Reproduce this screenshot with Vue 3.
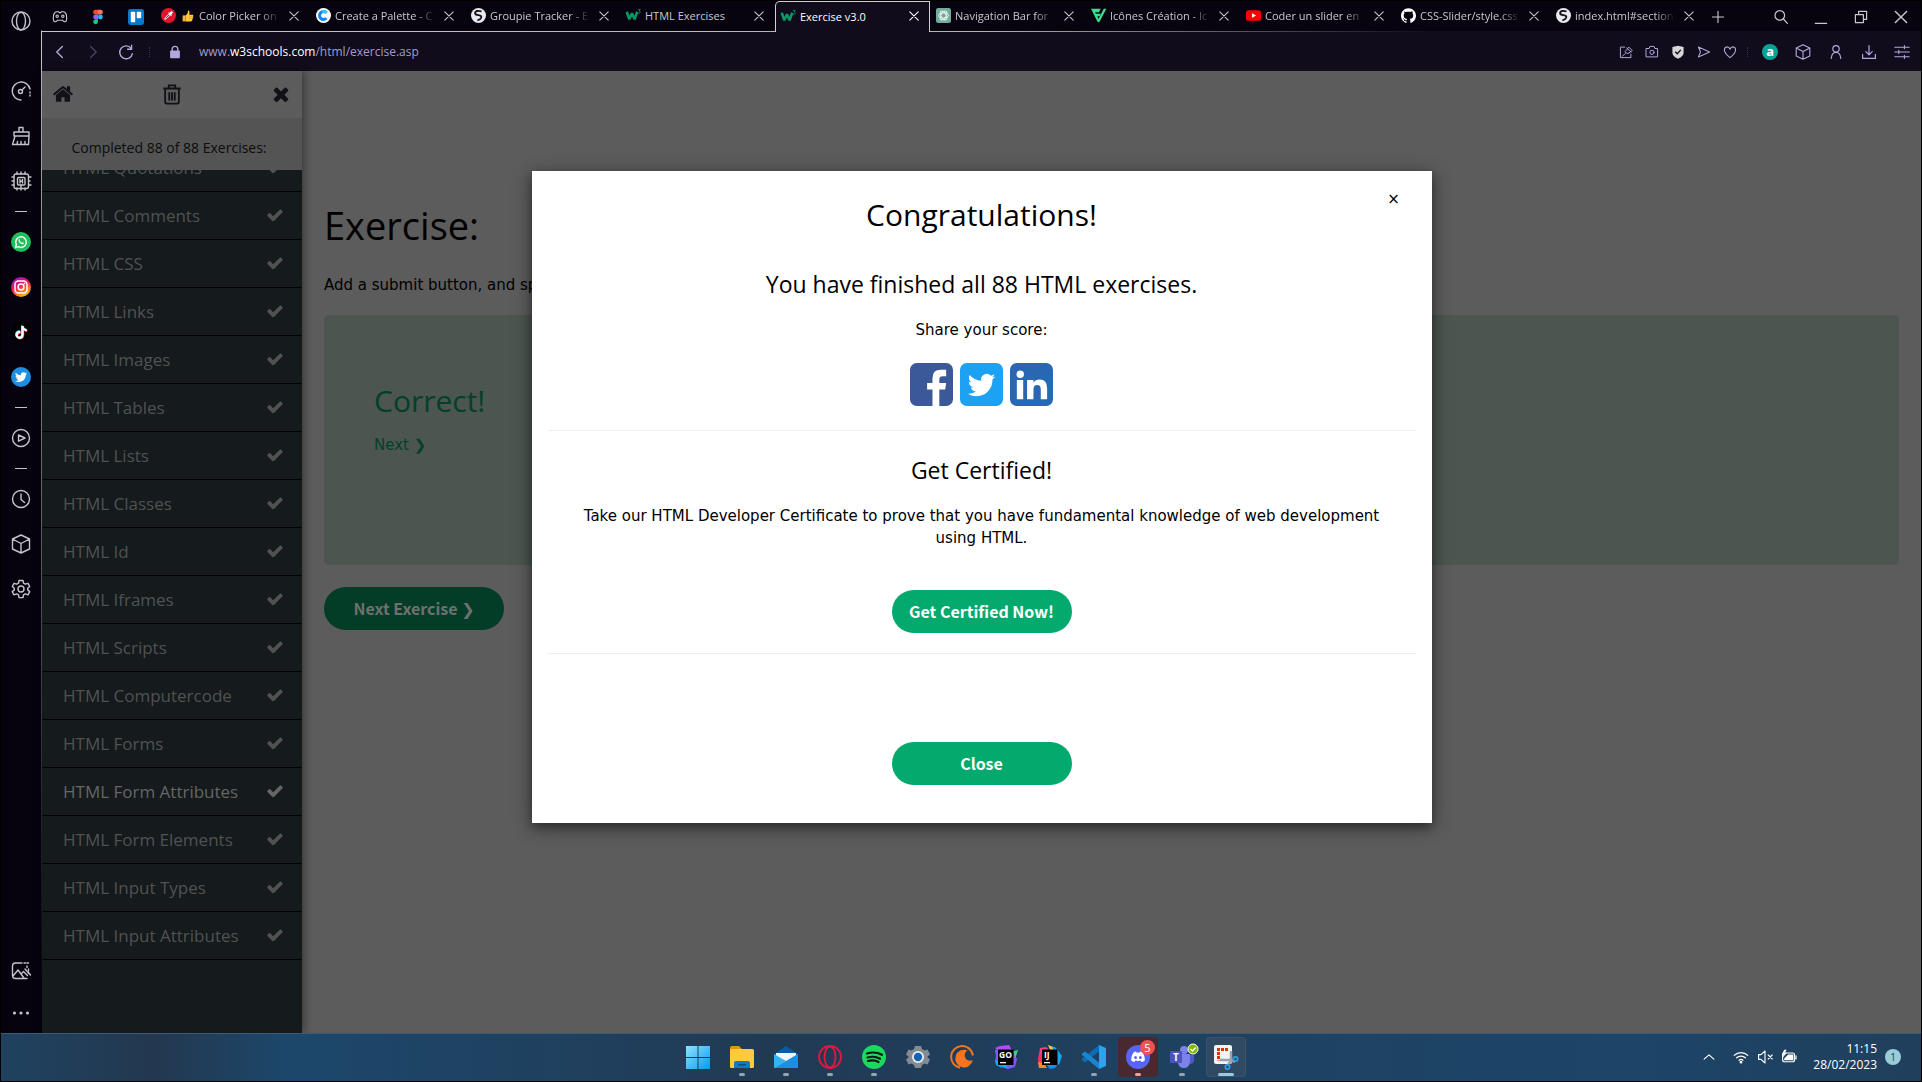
<script setup>
const bird = 'M23.953 4.57a10 10 0 01-2.825.775 4.958 4.958 0 002.163-2.723c-.951.555-2.005.959-3.127 1.184a4.92 4.92 0 00-8.384 4.482C7.69 8.095 4.067 6.13 1.64 3.162a4.822 4.822 0 00-.666 2.475c0 1.71.87 3.213 2.188 4.096a4.904 4.904 0 01-2.228-.616v.06a4.923 4.923 0 003.946 4.827 4.996 4.996 0 01-2.212.085 4.936 4.936 0 004.604 3.417 9.867 9.867 0 01-6.102 2.105c-.39 0-.779-.023-1.17-.067a13.995 13.995 0 007.557 2.209c9.053 0 13.998-7.496 13.998-13.985 0-.21 0-.42-.015-.63A9.935 9.935 0 0024 4.59z'
const note = 'M12.525.02c1.31-.02 2.61-.01 3.91-.02.08 1.53.63 3.09 1.75 4.17 1.12 1.11 2.7 1.62 4.24 1.79v4.03c-1.44-.05-2.89-.35-4.2-.97-.57-.26-1.1-.59-1.62-.93-.01 2.92.01 5.84-.02 8.75-.08 1.4-.54 2.79-1.35 3.94-1.31 1.92-3.58 3.17-5.91 3.21-1.43.08-2.86-.31-4.08-1.03-2.02-1.19-3.44-3.37-3.65-5.71-.02-.5-.03-1-.01-1.49.18-1.9 1.12-3.72 2.58-4.96 1.66-1.44 3.98-2.13 6.15-1.72.02 1.48-.04 2.96-.04 4.44-.99-.32-2.15-.23-3.02.37-.63.41-1.11 1.04-1.36 1.75-.21.51-.15 1.07-.14 1.61.24 1.64 1.82 3.02 3.5 2.87 1.12-.01 2.19-.66 2.77-1.61.19-.33.4-.67.41-1.06.1-1.79.06-3.57.07-5.36.01-4.03-.01-8.05.02-12.07z'
const line = (body, w = 1.2) => `<g fill="none" stroke="currentColor" stroke-width="${w}" stroke-linecap="round" stroke-linejoin="round">${body}</g>`
const globe = '<circle cx="10" cy="10" r="10" fill="#e8eaed"/><path d="M14 4.500q-8-2-8.500 2 0 2.500 4.500 3 4.500.5 3.500 3.500-1 2.500-5 3.500" fill="none" stroke="#15121f" stroke-width="2.600"/>'
const w3 = '<path d="M1 5l3.400 10L8 7l3.400 8L15 5" fill="none" stroke="#059862" stroke-width="3.400" stroke-linejoin="bevel"/><path d="M16 2h3l-1.600 2q2 .2 1.400 2t-3 1" fill="none" stroke="#059862" stroke-width="1.100"/>'
const cube = '<path d="M10 1l8.500 4v10L10 19l-8.500-4V5zM1.500 5L10 9.500 18.500 5M10 9.500V19"/>'

// Every glyph is drawn on a 20 × 20 grid.
const icons = {
  opera: line('<circle cx="10" cy="10" r="9"/><ellipse cx="10" cy="10" rx="4.500" ry="8.800"/>', 1.4),
  gauge: line('<path d="M10 19A9 9 0 1 1 19 8"/><path d="M19 11v5" stroke-dasharray="1 2"/><circle cx="9.500" cy="10.500" r="2"/><path d="M11 9l3-3"/>', 1.4),
  broom: line('<path d="M8 6V1.500h4V6M3 10V6h15v4M3 10h15M4 10L1.500 18.500h16l.5-8.500M6 18.500l.5-3M10 18.500v-3M14 18.500v-3"/>', 1.4),
  chip: line('<rect x="3" y="3" width="14.500" height="14.500" rx="2"/><rect x="6.500" y="6.500" width="7.500" height="7.500" rx="1"/><path d="M9 8.500v3.500M11.500 8.500v3.500M9 10.200h2.500M6 3V1M10 3V1M14 3V1M6 19v-2M10 19v-5M14 19v-2M1 6h2M1 10h2M1 14h2M17.500 6H20M17.500 10H19M17.500 14H20"/>', 1.4),
  whatsapp: '<circle cx="10" cy="10" r="10" fill="#1fbf5c"/><path d="M4.500 15.500l.8-3a5.300 5.300 0 1 1 2.100 2.200z" fill="none" stroke="#fff" stroke-width="1.400"/><path d="M7.700 7.600c.7-.9 1.200-.2 1.400.5.1.5-.4.700-.3 1 .4.900 1.200 1.400 2 1.700.4.100.7-.8 1.100-.6 1.500.6 1.100 1.200.5 1.700-2 1.200-5.600-2-4.700-4.300z" fill="#fff"/>',
  instagram: '<defs><linearGradient id="ig" x1="0" y1="0" x2=".5" y2="1"><stop offset="0" stop-color="#7a1be0"/><stop offset=".5" stop-color="#f0135f"/><stop offset="1" stop-color="#ffb300"/></linearGradient></defs><circle cx="10" cy="10" r="10" fill="url(#ig)"/><g fill="none" stroke="#fff" stroke-width="1.500"><rect x="4" y="4" width="12" height="12" rx="3.500"/><circle cx="10" cy="10" r="2.900"/></g><circle cx="13.500" cy="6.500" r=".9" fill="#fff"/>',
  tiktok: `<circle cx="10" cy="10" r="10" fill="#000"/><g transform="translate(3.200 3.400) scale(.54)"><path d="${note}" fill="#25f4ee"/><path d="${note}" transform="translate(2 2)" fill="#fe2c55"/><path d="${note}" transform="translate(1 1)" fill="#fff"/></g>`,
  twitter: `<circle cx="10" cy="10" r="10" fill="#1d8fe0"/><path d="${bird}" transform="translate(4 4.200) scale(.5)" fill="#fff"/>`,
  play: line('<circle cx="10" cy="10" r="8.500"/><path d="M7.500 7l6.500 3-6.500 3.200z"/>', 1.4),
  clock: line('<circle cx="10" cy="10" r="8.500"/><path d="M10 5v5.500l3.500 3"/>', 1.4),
  cube: line(cube, 1.4),
  gear: line('<circle cx="10" cy="10" r="3"/><path d="M8 1.500h4l.5 2.700 1.800 1L17 4.300l1.700 3.200-2 1.700v1.700l2 1.700L17 15.800l-2.700-.9-1.800 1-.5 2.700H8l-.5-2.700-1.800-1-2.700.9-1.700-3.200 2-1.700V9.200l-2-1.700L3 4.300l2.700.9 1.800-1z"/>', 1.4),
  picture: line('<path d="M11 2H4.500Q1.500 2 1.500 5v9.500q0 3 3 3H16M2 15l5-6 6 8M10.500 12.500l2-2 4 4M14 8l5.500 6"/><path d="M17.500 8v6M13 2h5M16 5v2" stroke-dasharray="1.500 1.500"/>', 1.4),
  dots: '<g fill="currentColor"><circle cx="3.500" cy="10" r="1.600"/><circle cx="10" cy="10" r="1.600"/><circle cx="16.500" cy="10" r="1.600"/></g>',
  mask: line('<path d="M6 3.500h2l2 1.500 2-1.500h2q3 0 4 4 .8 4 0 7-2 3-5-.5H7q-3 3.500-5 .5-.8-3 0-7 1-4 4-4z"/><circle cx="6.500" cy="9" r="1.500"/><circle cx="13.500" cy="9" r="1.500"/>', 1.4),
  figma: '<path d="M10 1H7a3 3 0 0 0 0 6h3z" fill="#f24e1e"/><path d="M10 1h3a3 3 0 0 1 0 6h-3z" fill="#ff7262"/><path d="M10 7H7a3 3 0 0 0 0 6h3z" fill="#a259ff"/><circle cx="13" cy="10" r="3" fill="#1abcfe"/><path d="M7 13h3v3a3 3 0 1 1-3-3z" fill="#0acf83"/>',
  trello: '<rect width="20" height="20" rx="3" fill="#0079d1"/><rect x="3.500" y="3.500" width="5.500" height="13" rx="1" fill="#fff"/><rect x="11" y="3.500" width="5.500" height="8" rx="1" fill="#fff"/>',
  picker: '<circle cx="10" cy="10" r="10" fill="#e0162f"/><path d="M5 15l1-2.500 4.500-4.500 1.500 1.500L7.500 14z" fill="none" stroke="#fff" stroke-width="1.200"/><path d="M9.500 6.500l4 4 1-1-.7-1 2.200-2.500-2-2-2.500 2.200-1-.7z" fill="#fff"/>',
  thumb: '<path d="M1 9h5v10H1z" fill="#f5b82e"/><path d="M6 9c3-2 4-4 4-8 3 0 3 4 2 7h5q2 0 2 2l-2 7q-.5 2-3 2H6z" fill="#ffc83d"/><path d="M12 11h6M12 14h6" stroke="#d99a1c"/>',
  coolors: '<circle cx="10" cy="10" r="10" fill="#fff"/><path d="M14 6.500A5.300 5.300 0 1 0 14 13.500" fill="none" stroke="#0a84ff" stroke-width="4"/><path d="M14 6.500a5 5 0 0 0-6-1.500" fill="none" stroke="#34c3f5" stroke-width="4"/>',
  globe,
  w3,
  gpt: '<rect width="20" height="20" rx="3" fill="#74aa9c"/><g fill="none" stroke="#e9f3f0" stroke-width="1.300"><ellipse cx="10" cy="10" rx="6.500" ry="3.500"/><ellipse cx="10" cy="10" rx="6.500" ry="3.500" transform="rotate(60 10 10)"/><ellipse cx="10" cy="10" rx="6.500" ry="3.500" transform="rotate(120 10 10)"/></g>',
  flaticon: '<path d="M0 1h13l-2.500 4.500H5.500l1 2H13L11.500 11H8.500l1.500 3.500L17 1h3.500L11.500 18q-1.500 2-3 0z" fill="#3ddc91"/>',
  youtube: '<rect y="3" width="20" height="14" rx="3.500" fill="#f00"/><path d="M8 7l5.500 3L8 13z" fill="#fff"/>',
  github: '<path transform="scale(.833)" fill="#fff" d="M12 .297c-6.630 0-12 5.373-12 12 0 5.303 3.438 9.800 8.205 11.385.6.113.82-.258.82-.577 0-.285-.01-1.040-.015-2.040-3.338.724-4.042-1.610-4.042-1.610C4.422 18.070 3.633 17.700 3.633 17.700c-1.087-.744.084-.729.084-.729 1.205.084 1.838 1.236 1.838 1.236 1.070 1.835 2.809 1.305 3.495.998.108-.776.417-1.305.76-1.605-2.665-.3-5.466-1.332-5.466-5.930 0-1.310.465-2.380 1.235-3.220-.135-.303-.54-1.523.105-3.176 0 0 1.005-.322 3.300 1.230.96-.267 1.980-.399 3-.405 1.020.006 2.040.138 3 .405 2.280-1.552 3.285-1.230 3.285-1.230.645 1.653.24 2.873.12 3.176.765.84 1.230 1.910 1.230 3.220 0 4.610-2.805 5.625-5.475 5.920.42.36.81 1.096.81 2.220 0 1.606-.015 2.896-.015 3.286 0 .315.21.69.825.57C20.565 22.092 24 17.592 24 12.297c0-6.627-5.373-12-12-12"/>',
  x: line('<path d="M3 3l14 14M17 3L3 17"/>', 1.8),
  plus: line('<path d="M10 2v16M2 10h16"/>', 1.6),
  search: line('<circle cx="8.500" cy="8" r="6"/><path d="M13 12.500l5 5.500"/>', 1.5),
  min: line('<path d="M3 18h14"/>', 1.6),
  restore: line('<path d="M3 7h10v10H3zM7 7V3h10v10h-4"/>', 1.5),
  back: line('<path d="M13 3l-7 7 7 7"/>', 1.7),
  forward: line('<path d="M7 3l7 7-7 7"/>', 1.7),
  reload: line('<path d="M16.500 5.500A8 8 0 1 0 18 12M17 1.500v5h-5"/>', 1.7),
  lock: '<rect x="3" y="8" width="14" height="11" rx="1" fill="currentColor"/><path d="M6 9V6a4 4 0 0 1 8 0v3" fill="none" stroke="currentColor" stroke-width="2"/>',
  edit: line('<path d="M8 3H2v15h15v-5M11 4l6 6M10 8l4-5 5 5-5 3.500-3 .5-2-2zM9 12l-4 4"/>', 1.4),
  camera: line('<path d="M2 5h4l1-3h6l1 3h4v12H2z"/><circle cx="10" cy="10.500" r="3"/>', 1.4),
  shield: '<path d="M10 1l8 2v8q0 5-8 8.500Q2 16 2 11V3z" fill="#d6d6d6"/><path d="M6 9.500l3 3 5-5.500" fill="none" stroke="#100c1c" stroke-width="2"/>',
  send: line('<path d="M2 3l16 7-16 7 3-7z"/>', 1.5),
  heart: line('<path d="M10 18C4 13 2 10 2 7c0-5 6-6 8-1 2-5 8-4 8 1 0 3-2 6-8 11z"/>', 1.5),
  avatar: '<circle cx="10" cy="10" r="10" fill="#0ba294"/><text x="10" y="15" text-anchor="middle" font-family="Open Sans, sans-serif" font-weight="700" font-size="16" fill="#fff">a</text>',
  person: line('<circle cx="10" cy="6" r="4"/><path d="M4 18c1-10 11-10 12 0"/>', 1.5),
  download: line('<path d="M2 13v5h16v-5M10 2v11M6 9.500l4 4 4-4"/>', 1.5),
  sliders: line('<path d="M1 4h18M1 10h18M1 16h18M13 2v4M6 8v4M13 14v4"/>', 1.4),
  wifi: line('<path d="M1.500 8a12 12 0 0 1 17 0M4.500 11a8 8 0 0 1 11 0M7.500 14a4 4 0 0 1 5 0"/><circle cx="10" cy="16.500" r="1"/>', 1.5),
  mute: line('<path d="M2 7h3l5-4.500v15L5 13H2zM14 7.500l5 5M19 7.500l-5 5"/>', 1.4),
  battery: '<rect x="2" y="5" width="15" height="11" rx="2.500" fill="none" stroke="currentColor" stroke-width="1.400"/><path d="M9 7h6.500v7H4v-2zM18 8h1.500v5H18z" fill="currentColor"/><path d="M4 1L1 7h2l-1 4 5-6H5l2-4z" fill="currentColor"/>',
  up: line('<path d="M3 13l7-6 7 6"/>', 1.6),
}

const rail = [
  ['gauge', 'broom', 'chip'],
  ['whatsapp', 'instagram', 'tiktok', 'twitter'],
  ['play'],
  ['clock', 'cube', 'gear'],
]
const tabs = [
  { icon: 'picker', extra: 'thumb', text: 'Color Picker on' },
  { icon: 'coolors', text: 'Create a Palette - C' },
  { icon: 'globe', text: 'Groupie Tracker - E' },
  { icon: 'w3', text: 'HTML Exercises' },
  { icon: 'w3', text: 'Exercise v3.0', active: true },
  { icon: 'gpt', text: 'Navigation Bar for' },
  { icon: 'flaticon', text: 'Icônes Création - Ic' },
  { icon: 'youtube', text: 'Coder un slider en' },
  { icon: 'github', text: 'CSS-Slider/style.css' },
  { icon: 'globe', text: 'index.html#section' },
]
const lessons = ['Quotations', 'Comments', 'CSS', 'Links', 'Images', 'Tables', 'Lists', 'Classes', 'Id', 'Iframes', 'Scripts', 'Computercode', 'Forms', 'Form Attributes', 'Form Elements', 'Input Types', 'Input Attributes']

// Taskbar artwork, on a 24 × 24 grid.
const apps = [
  { name: 'Start', art: '<defs><linearGradient id="win" x1="0" y1="0" x2="1" y2="1"><stop offset="0" stop-color="#8fe3ff"/><stop offset="1" stop-color="#0a98f0"/></linearGradient></defs><path d="M0 1h11.500v11H0zM12.500 1H24v11H12.500zM0 13h11.500v11H0zM12.500 13H24v11H12.500z" fill="url(#win)"/>' },
  { name: 'Files', run: true, art: '<path d="M0 3q0-2 2-2h7l3 3v4H0z" fill="#d99a12"/><rect y="4" width="24" height="19" rx="1.500" fill="#ffcb3d"/><path d="M4 23v-5q0-2 2-2h12q2 0 2 2v5z" fill="#1478c8"/><path d="M8 19h8v1.500H8z" fill="#0b4d8a"/>' },
  { name: 'Mail', run: true, art: '<path d="M0 9l12-8 12 8v14H0z" fill="#0c59a4"/><path d="M2 8h20v9H2z" fill="#f4f4f4"/><path d="M0 9l12 7 12-7v13q0 1-1 1H1q-1 0-1-1z" fill="#35b4f2"/><path d="M24 9v13q0 1-1 1H1z" fill="#1d8fe0"/>' },
  { name: 'Opera', run: true, art: '<g fill="none" stroke="#e0183f" stroke-width="1.800"><circle cx="12" cy="12" r="11"/><ellipse cx="12" cy="12" rx="5.500" ry="10.500"/></g>' },
  { name: 'Spotify', run: true, art: '<circle cx="12" cy="12" r="12" fill="#1ed760"/><path d="M5 8.500q8-2.500 15 1.300M5.500 12.500q7-2 12.500 1.200M6 16q6-1.500 10.500 1" fill="none" stroke="#0b1a10" stroke-width="2.200" stroke-linecap="round"/>' },
  { name: 'Settings', art: '<path d="M9 1h6l1 3 2.500 1.500 3-1L24 9.500l-2.500 2v1l2.500 2-2.500 5-3-1L16 20l-1 3H9l-1-3-2.500-1.500-3 1L0 14.500l2.500-2v-1L0 9.500l2.500-5 3 1L8 4z" fill="#858b93"/><circle cx="12" cy="12" r="6" fill="#e8edf2"/><circle cx="12" cy="12" r="4.200" fill="#1265b0"/>' },
  { name: 'Crunchyroll', art: '<path d="M23 10.500A11 11 0 1 0 10 22.800" fill="none" stroke="#f47521" stroke-width="2"/><path d="M17.500 5.500A8.800 8.800 0 1 0 22.800 15 4.800 4.800 0 1 1 17.500 5.500z" fill="#f47521"/>' },
  { name: 'GoLand', art: '<path d="M1 3l5-2 9-1 3 5H3z" fill="#b14bff"/><path d="M1 5h4v10l-4 2 1-6z" fill="#7d5bff"/><path d="M18 6l5 0-2 5 2 3-2 8-4 1z" fill="#8a4dff"/><path d="M20 6l4-1-3 9z" fill="#3ddc6a"/><path d="M1 15l5 2 2 6-6-3zM7 19h11l-4 5-6-2z" fill="#1fa8f5"/><path d="M12 20h8l-2 3-5 1z" fill="#7b5cff"/><rect x="4" y="4.500" width="15.500" height="15.500" fill="#000"/><text x="5" y="12.500" font-family="Open Sans, sans-serif" font-weight="700" font-size="8.500" fill="#fff">GO</text><path d="M6 17h6v1.300H6z" fill="#fff"/>' },
  { name: 'IntelliJ', art: '<path d="M2 3l6-1 4 4-7 4-4 0z" fill="#ff3d8b"/><path d="M1 9h4v10l-4 1-1-6z" fill="#ff2e63"/><path d="M10 0l8 3-5 4z" fill="#ffc93d"/><path d="M14 1l5 3 5 7-3 9-3-2z" fill="#16a6e8"/><path d="M0 17l6 1 3 5-8 0z" fill="#ff8a1f"/><path d="M8 19h12l-3 4-5 1z" fill="#1f8af5"/><rect x="4" y="4.500" width="15.500" height="15.500" fill="#000"/><text x="6" y="12.500" font-family="Open Sans, sans-serif" font-weight="700" font-size="8.500" fill="#fff">IJ</text><path d="M6 17h6v1.300H6z" fill="#fff"/>' },
  { name: 'Code', run: true, art: '<path d="M17 0v6.500L3 17.500 0 15.500V14z" fill="#0f6cb0"/><path d="M17 24v-6.500L3 6.500 0 8.500V10z" fill="#1785d0"/><path d="M17 0l7 3v18l-7 3z" fill="#29a4ee"/>' },
  { name: 'Discord', run: true, alert: true, art: '<circle cx="12" cy="12" r="12" fill="#5865f2"/><path d="M8 7l2-.5.6 1.200q1.400-.2 2.800 0L14 6.500l2 .5q3 3.500 2.800 8.500-1.500 1.200-3.200 1.600l-.9-1.500q-2.700.6-5.400 0l-.9 1.500q-1.700-.4-3.200-1.600Q5 10.500 8 7z" fill="#fff"/><ellipse cx="9.600" cy="12.500" rx="1.400" ry="1.600" fill="#5865f2"/><ellipse cx="14.400" cy="12.500" rx="1.400" ry="1.600" fill="#5865f2"/>' },
  { name: 'Teams', run: true, art: '<circle cx="14" cy="5" r="4" fill="#7b83eb"/><path d="M9 9h11v8q-1 6-6 6t-6-5z" fill="#7b83eb"/><path d="M20 10h4v6q-1 3-4 3z" fill="#5059c9"/><rect y="6" width="12" height="12" rx="1" fill="#4b53bc"/><text x="6" y="15.500" text-anchor="middle" font-family="Open Sans, sans-serif" font-weight="700" font-size="10" fill="#fff">T</text><circle cx="23" cy="4" r="5" fill="#7fba00" stroke="#fff"/><path d="M20.500 4l2 2 3.200-3.500" fill="none" stroke="#fff" stroke-width="1.500"/>' },
  { name: 'Snipping Tool', run: true, current: true, art: '<rect width="18" height="19" rx="2" fill="#f3f3f3"/><path d="M3 4.500h11M4.500 3v12.500" stroke="#d8320e" stroke-width="3" stroke-dasharray="3 1"/><path d="M17 6v9q0 2-3 4M6 15h9q3 0 6 2" fill="none" stroke="#9aa1a8" stroke-width="2.500"/><g fill="none" stroke="#2a9fe6" stroke-width="1.700"><circle cx="21.500" cy="14" r="2.200"/><circle cx="13.500" cy="22" r="2.200"/></g>' },
]
</script>

<template>
  <div class="desktop">
    <div class="browser">
      <nav class="rail" aria-label="Browser sidebar">
        <button class="ico-btn logo" aria-label="Menu"><svg viewBox="0 0 20 20" v-html="icons.opera" /></button>
        <div v-for="(group, g) in rail" :key="g" class="rail-group">
          <button v-for="name in group" :key="name" class="ico-btn" :aria-label="name"><svg viewBox="0 0 20 20" v-html="icons[name]" /></button>
        </div>
        <div class="rail-group foot">
          <button class="ico-btn" aria-label="Wallpaper"><svg viewBox="0 0 20 20" v-html="icons.picture" /></button>
          <button class="ico-btn" aria-label="More"><svg viewBox="0 0 20 20" v-html="icons.dots" /></button>
        </div>
      </nav>

      <div class="window">
        <header class="tabbar">
          <div class="pinned">
            <button v-for="p in ['mask', 'figma', 'trello']" :key="p" class="ico-btn" :aria-label="p"><svg viewBox="0 0 20 20" v-html="icons[p]" /></button>
          </div>
          <div v-for="(t, i) in tabs" :key="i" class="tab" :class="{ active: t.active }">
            <svg class="fav" viewBox="0 0 20 20" v-html="icons[t.icon]" />
            <svg v-if="t.extra" class="emoji" viewBox="0 0 20 20" v-html="icons[t.extra]" />
            <span class="label" :class="{ whole: i === 3 || i === 4 }">{{ t.text }}</span>
            <button class="ico-btn shut" aria-label="Close tab"><svg viewBox="0 0 20 20" v-html="icons.x" /></button>
          </div>
          <button class="ico-btn plus" aria-label="New tab"><svg viewBox="0 0 20 20" v-html="icons.plus" /></button>
          <div class="controls">
            <button v-for="c in ['search', 'min', 'restore', 'x']" :key="c" class="ico-btn" :aria-label="c"><svg viewBox="0 0 20 20" v-html="icons[c]" /></button>
          </div>
        </header>

        <div class="address">
          <div class="history">
            <button v-for="h in ['back', 'forward', 'reload']" :key="h" class="ico-btn" :class="h" :aria-label="h"><svg viewBox="0 0 20 20" v-html="icons[h]" /></button>
          </div>
          <i class="sep" />
          <svg class="lock" viewBox="0 0 20 20" v-html="icons.lock" />
          <a class="url" href="#">www.<b>w3schools.com</b>/html/exercise.asp</a>
          <div class="tools">
            <button v-for="a in ['edit', 'camera', 'shield', 'send', 'heart']" :key="a" class="ico-btn" :aria-label="a"><svg viewBox="0 0 20 20" v-html="icons[a]" /></button>
          </div>
          <i class="sep" />
          <div class="tools wide">
            <button v-for="a in ['avatar', 'cube', 'person', 'download', 'sliders']" :key="a" class="ico-btn" :aria-label="a"><svg viewBox="0 0 20 20" v-html="icons[a]" /></button>
          </div>
        </div>

        <div class="page">
          <aside class="menu">
            <div class="menu-tools">
              <button class="ico-btn" aria-label="Home"><svg viewBox="0 0 1792 1792"><path fill="currentColor" d="M1472 992v480q0 26-19 45t-45 19h-384v-384h-256v384h-384q-26 0-45-19t-19-45v-480q0-1 .5-3t.5-3l575-474 575 474q1 2 1 6zm223-69l-62 74q-8 9-21 11h-3q-13 0-21-7l-692-577-692 577q-12 8-24 7-13-2-21-11l-62-74q-8-10-7-23.500t11-21.500l719-599q32-26 76-26t76 26l244 204v-195q0-14 9-23t23-9h192q14 0 23 9t9 23v408l219 182q10 8 11 21.500t-7 23.500z" /></svg></button>
              <button class="ico-btn" aria-label="Reset"><svg viewBox="0 0 24 24"><path d="M2.500 6h19M8.500 5.500V2.500h7v3M4.500 6v14.500q0 2 2 2h11q2 0 2-2V6M9 10v9M12 10v9M15 10v9" fill="none" stroke="currentColor" stroke-width="2" /></svg></button>
              <button class="ico-btn" aria-label="Close menu"><svg viewBox="0 0 1792 1792"><path fill="currentColor" d="M1490 1322q0 40-28 68l-136 136q-28 28-68 28t-68-28l-294-294-294 294q-28 28-68 28t-68-28l-136-136q-28-28-28-68t28-68l294-294-294-294q-28-28-28-68t28-68l136-136q28-28 68-28t68 28l294 294 294-294q28-28 68-28t68 28l136 136q28 28 28 68t-28 68l-294 294 294 294q28 28 28 68z" /></svg></button>
            </div>
            <p class="progress">Completed 88 of 88 Exercises:</p>
            <div class="lessons">
              <ul>
                <li v-for="l in lessons" :key="l">
                  <a href="#" :class="{ current: l === 'Form Attributes' }">
                    <span>HTML {{ l }}</span>
                    <svg viewBox="0 0 1792 1792"><path fill="currentColor" d="M1671 566q0 40-28 68l-724 724-136 136q-28 28-68 28t-68-28l-136-136-362-362q-28-28-28-68t28-68l136-136q28-28 68-28t68 28l294 295 656-657q28-28 68-28t68 28l136 136q28 28 28 68z" /></svg>
                  </a>
                </li>
              </ul>
            </div>
          </aside>

          <main class="exercise">
            <h1>Exercise:</h1>
            <p>Add a submit button, and specify that the form</p>
            <section class="result">
              <h2>Correct!</h2>
              <a href="#">Next ❯</a>
            </section>
            <button class="pill dim">Next Exercise ❯</button>
          </main>

          <div class="layer">
            <div class="modal" role="dialog" aria-labelledby="done">
              <button class="dismiss" aria-label="Dismiss">×</button>
              <h2 id="done">Congratulations!</h2>
              <h3>You have finished all 88 HTML exercises.</h3>
              <p class="share">Share your score:</p>
              <div class="social">
                <a href="#" aria-label="Facebook"><svg viewBox="0 0 44 44"><rect width="44" height="44" rx="7" fill="#3b5998" /><path d="M23 44V27h-5.500v-6.500H23v-5q0-8.500 8.500-8.500H37v6.500h-3.500q-3.500 0-3.500 3.500v3.500h7L36 27h-6v17z" fill="#fff" /></svg></a>
                <a href="#" aria-label="Twitter"><svg viewBox="0 0 44 44"><rect width="44" height="44" rx="7" fill="#1da1f2" /><path :d="bird" transform="translate(8 8.500) scale(1.170)" fill="#fff" /></svg></a>
                <a href="#" aria-label="LinkedIn"><svg viewBox="0 0 44 44"><rect width="44" height="44" rx="7" fill="#2867b2" /><circle cx="10.500" cy="11.500" r="3.800" fill="#fff" /><path d="M7 17.500h6.500V37H7zM17.500 17.500H24v2.700q2-3.200 6.500-3.200 7.500 0 7.500 9v11h-6.500V27q0-4.500-3.700-4.500T24 27v10h-6.500z" fill="#fff" /></svg></a>
              </div>
              <hr>
              <h3 class="cert">Get Certified!</h3>
              <p>Take our HTML Developer Certificate to prove that you have fundamental knowledge of web development using HTML.</p>
              <button class="pill get">Get Certified Now!</button>
              <hr class="low">
              <button class="pill close">Close</button>
            </div>
          </div>
        </div>
      </div>
    </div>

    <footer class="taskbar">
      <div class="apps">
        <button v-for="a in apps" :key="a.name" class="app" :class="{ run: a.run, alert: a.alert, current: a.current }" :aria-label="a.name">
          <svg viewBox="0 0 24 24" v-html="a.art" />
          <span v-if="a.alert" class="badge">5</span>
        </button>
      </div>
      <div class="tray">
        <svg v-for="t in ['up', 'wifi', 'mute', 'battery']" :key="t" :class="t" viewBox="0 0 20 20" v-html="icons[t]" />
        <time>11:15<br>28/02/2023</time>
        <span class="count">1</span>
      </div>
    </footer>
  </div>
</template>

<style>
body { background: #000; }
</style>

<style scoped>
.desktop {
  box-sizing: border-box;
  display: flex;
  flex-direction: column;
  height: 100vh;
  border: 1px solid #000;
  overflow: hidden;
  font-family: "Open Sans", "Noto Sans", sans-serif;
  background: #06030f;
}
h1, h2, h3, p, ul { margin: 0; padding: 0; font-weight: 400; list-style: none; }
button { padding: 0; border: 0; background: none; color: inherit; font: inherit; }
a { text-decoration: none; color: inherit; }
svg { display: block; flex: none; overflow: visible; }
.ico-btn { display: flex; flex: none; }
.ico-btn svg { width: 100%; height: 100%; }
.browser { display: flex; flex: 1; min-height: 0; }

.rail {
  display: flex;
  flex-direction: column;
  align-items: center;
  width: 40px;
  flex: none;
  color: #c4c4c8;
  border-right: 1px solid;
  border-image: linear-gradient(#06030f 30px, #c8c8c8 31px, #a0a0a0 25%, #55555c 60%, #06030f 95%) 1;
}
.rail .ico-btn { width: 20px; height: 20px; }
.logo { margin: 10px 0 50px; }
.rail-group { display: flex; flex-direction: column; align-items: center; gap: 25px; }
.rail-group + .rail-group:not(.foot)::before {
  content: "";
  width: 12px;
  height: 1px;
  margin: 20px 0 -5px;
  background: #c4c4c8;
}
.foot { margin-top: auto; gap: 22px; padding-bottom: 10px; }

.window { display: flex; flex-direction: column; flex: 1; min-width: 0; }
.tabbar {
  display: flex;
  align-items: center;
  height: 31px;
  flex: none;
  background: linear-gradient(90deg, #c8c8c8, #b4b4b4 50%, #100c1c 74%) bottom / 100% 1px no-repeat, #07040f;
  color: #c8c8cc;
  font-size: 11px;
}
.pinned { display: flex; gap: 22px; width: 91px; padding: 0 12px 0 10px; }
.pinned .ico-btn { width: 16px; height: 16px; }
.tab {
  box-sizing: border-box;
  display: flex;
  align-items: center;
  gap: 4px;
  width: 155px;
  height: 31px;
  padding: 0 10px 2px 6px;
}
.tab.active {
  padding: 0 9px 2px 5px;
  border: 1px solid #d0d0d0;
  border-bottom: 0;
  border-top-left-radius: 5px;
  background: #100c1c;
  color: #fff;
}
.fav { width: 15px; height: 15px; }
.emoji { width: 12px; height: 12px; margin: 0 1px 0 2px; }
.label {
  flex: 1;
  min-width: 0;
  white-space: nowrap;
  mask-image: linear-gradient(90deg, #000 calc(100% - 20px), transparent);
}
.label.whole { mask-image: none; }
.shut { width: 12px; height: 12px; margin-left: 4px; }
.plus { width: 14px; height: 14px; margin-left: 6px; }
.controls { display: flex; gap: 24px; margin-left: auto; padding-right: 12px; }
.controls .ico-btn { width: 16px; height: 16px; }

.address {
  display: flex;
  align-items: center;
  height: 39px;
  flex: none;
  background: #100c1c;
  color: #b3a8dc;
}
.history { display: flex; gap: 17px; padding: 0 15px 0 10px; }
.history .ico-btn { width: 16px; height: 16px; }
.history .forward { color: #4b4462; }
.sep { height: 10px; border-left: 1px dotted #37305c; }
.lock { width: 14px; height: 14px; margin: 0 17px 0 18px; }
.url { flex: 1; font-size: 12px; color: #a59bcb; }
.url b { font-weight: 400; color: #fff; }
.tools { display: flex; gap: 12px; padding-right: 10px; }
.tools .ico-btn { width: 14px; height: 14px; }
.tools.wide { gap: 17px; padding: 0 11px 0 14px; }
.wide .ico-btn { width: 16px; height: 16px; }

.page { position: relative; display: flex; flex: 1; min-height: 0; background: #5c5c5c; }
.menu {
  display: flex;
  flex-direction: column;
  width: 260px;
  flex: none;
  background: #151a1c;
  box-shadow: 2px 0 8px rgba(0, 0, 0, .4);
}
.menu-tools {
  box-sizing: border-box;
  display: flex;
  justify-content: space-between;
  align-items: center;
  height: 47px;
  padding: 0 9px 2px;
  color: #111217;
  background: #5c5c5c;
}
.menu-tools .ico-btn { width: 24px; height: 22px; }
.progress {
  height: 52px;
  padding-right: 6px;
  line-height: 60px;
  text-align: center;
  font-size: 14px;
  color: #0c0c0c;
  background: #545454;
}
.lessons { flex: 1; min-height: 0; overflow: hidden; padding: 0 1px; }
.lessons ul { margin-top: -26px; }
.lessons li { border-bottom: 1px solid #000; }
.lessons a {
  box-sizing: border-box;
  display: flex;
  align-items: center;
  justify-content: space-between;
  height: 47px;
  padding: 0 17px 1px 20px;
  font-size: 17px;
  color: #505252;
}
.lessons a.current { color: #646666; }
.lessons svg { width: 18px; height: 18px; }

.exercise { flex: 1; min-width: 0; padding: 124px 22px 0; color: #000; }
.exercise h1 { font-size: 38px; line-height: 60px; }
.exercise p { margin: 20px 0; font: 15px/20px "DejaVu Sans", sans-serif; }
.result {
  box-sizing: border-box;
  height: 250px;
  margin-bottom: 22px;
  padding: 62px 50px;
  border-radius: 5px;
  background: #4c5550;
  color: #03402a;
}
.result h2 { font-size: 30px; line-height: 48px; }
.result a { display: block; margin-top: 10px; font: 15px/20px "DejaVu Sans", sans-serif; }
.pill {
  width: 180px;
  height: 43px;
  padding-bottom: 2px;
  border-radius: 25px;
  background: #04aa6d;
  color: #fff;
  font: 700 16px/24px "Noto Sans CJK SC", "DejaVu Sans", sans-serif;
}
.pill.dim { background: #033d28; color: #707070; }

.layer { position: absolute; inset: 0; display: flex; justify-content: center; align-items: flex-start; padding-top: 100px; }
.modal {
  position: relative;
  box-sizing: border-box;
  display: flex;
  flex-direction: column;
  align-items: center;
  width: 900px;
  max-width: 90%;
  padding: 20px 16px 38px;
  background: #fff;
  color: #000;
  text-align: center;
  box-shadow: 0 4px 10px rgba(0, 0, 0, .4), 0 4px 20px rgba(0, 0, 0, .3);
}
.dismiss { position: absolute; top: 18px; right: 28px; width: 20px; font: 15px/20px "DejaVu Sans", sans-serif; }
.modal h2 { font-size: 30px; line-height: 48px; }
.modal h3 { margin: 27px 0 1px; font-size: 23px; line-height: 36px; }
.modal h3.cert { margin-top: 21px; }
.modal p { margin-top: 16px; padding: 0 30px; font: 15px/22px "DejaVu Sans", sans-serif; }
.social { display: flex; gap: 7px; margin: 22px 0 24px; }
.social svg { width: 43px; height: 43px; }
hr { width: 100%; margin: 0; border: 0; border-top: 1px solid #eee; }
.get { margin: 41px 0 20px; }
.close { margin-top: 88px; }

.taskbar {
  position: relative;
  box-sizing: border-box;
  display: flex;
  align-items: center;
  justify-content: center;
  height: 48px;
  flex: none;
  padding-bottom: 1px;
  border-top: 1px solid #3f5a70;
  background: linear-gradient(90deg, #1f4260, #23384f 8%, #1c476b 15%, #20405e 30%, #213a54 40%, #1f4160 60%, #1c4568 85%, #203f5c);
  color: #fff;
}
.apps { display: flex; gap: 4px; margin-left: 2px; }
.app { position: relative; display: flex; justify-content: center; align-items: center; width: 40px; height: 40px; border-radius: 4px; }
.app svg { width: 24px; height: 24px; }
.app.run::after {
  content: "";
  position: absolute;
  bottom: 1px;
  width: 6px;
  height: 3px;
  border-radius: 2px;
  background: #99a4af;
}
.app.alert { background: #47292f; }
.app.alert::after { background: #ff9a9f; }
.app.current { background: #304a63; box-shadow: 0 0 0 1px #3a536b inset; }
.app.current::after { width: 16px; background: #98cbe0; }
.badge {
  position: absolute;
  top: 3px;
  right: 3px;
  width: 15px;
  border-radius: 8px;
  background: #ed5353;
  font-size: 11px;
  line-height: 15px;
}
.tray { position: absolute; right: 20px; top: 0; bottom: 2px; display: flex; align-items: center; }
.tray svg { width: 16px; height: 16px; margin-right: 8px; }
.tray .up { width: 14px; height: 14px; margin-right: 17px; }
time { margin: 0 8px; font-size: 12px; line-height: 16px; text-align: right; }
.count { width: 16px; border-radius: 8px; background: #98cbdb; color: #21404f; font-size: 10px; line-height: 16px; text-align: center; }
</style>
